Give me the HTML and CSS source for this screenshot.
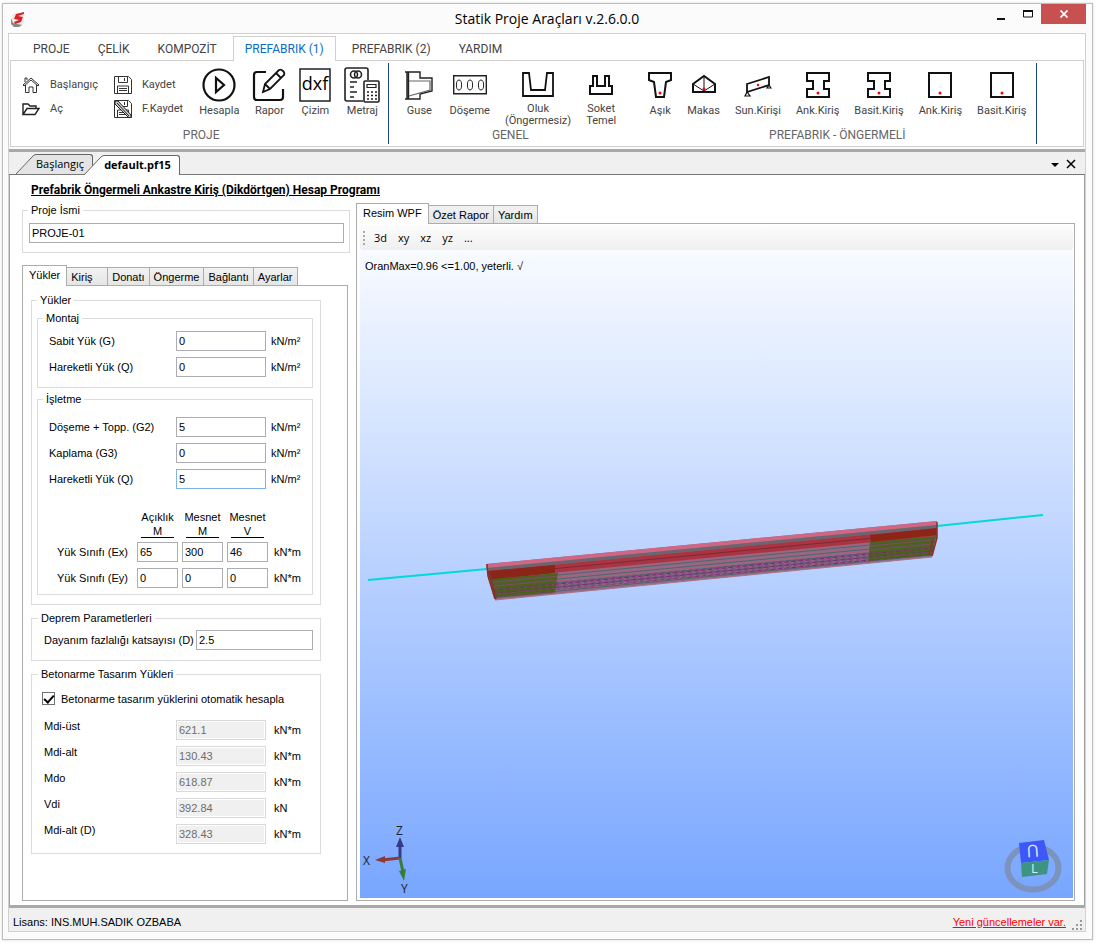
FILE: index.html
```html
<!DOCTYPE html>
<html lang="tr">
<head>
    <meta charset="UTF-8">
    <meta name="viewport" content="width=device-width, initial-scale=1.0">
    <title>Statik Proje Araçları v.2.6.0.0</title>
    <link rel="stylesheet" href="styles.css">
</head>
<body>
<div class="window">

    <!-- Başlık çubuğu -->
    <header class="titlebar">
        <svg class="logo" width="16" height="16" viewBox="0 0 16 16">
            <path d="M1 4l3-2h9v10l-3 3H4l-3-3z" fill="#ececec"/>
            <path d="M0 7l2 5 9 2-3 2H3l-3-3z" fill="#888"/>
            <path d="M13 1L5 3 3 8l5 1-5 2 1 2 6-2 2-5-5-1 6-2z" fill="#d9232a"/>
        </svg>
        <h1>Statik Proje Araçları v.2.6.0.0</h1>
        <div class="window-buttons">
            <button type="button" aria-label="Küçült"><svg width="10" height="12" viewBox="0 0 10 12"><path d="M1 10h8v2H1z" fill="#111"/></svg></button>
            <button type="button" aria-label="Büyüt"><svg width="10" height="12" viewBox="0 0 10 12"><path d="M.5 3v6h9V3z" fill="none" stroke="#111"/><path d="M0 2h10v2H0z" fill="#111"/></svg></button>
            <button type="button" class="close" aria-label="Kapat"><svg width="8" height="8" viewBox="0 0 8 8"><path d="M.5.5l7 7M7.5.5l-7 7" stroke="#fff" stroke-width="1.8"/></svg></button>
        </div>
    </header>

    <div class="frame">
        <!-- Şerit menü -->
        <nav class="ribbon-tabs">
            <button type="button">PROJE</button>
            <button type="button">ÇELİK</button>
            <button type="button">KOMPOZİT</button>
            <button type="button" class="active">PREFABRIK (1)</button>
            <button type="button">PREFABRIK (2)</button>
            <button type="button">YARDIM</button>
        </nav>

        <div class="ribbon">
            <section class="group project-group">
                <div class="tools">
                    <div class="small-tools">
                        <button type="button">
                            <svg width="18" height="18" viewBox="0 0 18 18" fill="none" stroke="#333"><path d="M1 9l8-7 8 7-1 1-7-6-7 6zM3.5 9v7.500H7V11h4v5.500h3.500V9M3 6V2h2v2"/></svg>
                            Başlangıç
                        </button>
                        <button type="button">
                            <svg width="18" height="18" viewBox="0 0 18 18" fill="none" stroke="#222" stroke-width="1.400"><path d="M1 14.500V4h5l2 2h6v3M1 14.500l4-6h12l-4 6z"/></svg>
                            Aç
                        </button>
                    </div>
                    <div class="small-tools">
                        <button type="button">
                            <svg width="18" height="18" viewBox="0 0 18 18" fill="none" stroke="#333"><path d="M.5.5h14l3 3v14H.5zM4.500.5v6h9v-6M10.500 2v3M3.500 17v-7h11v7M5 12.500h8M5 14.500h8"/></svg>
                            Kaydet
                        </button>
                        <button type="button">
                            <svg width="18" height="18" viewBox="0 0 18 18" fill="none" stroke="#333"><path d="M.5.5h14l3 3v14H.5zM4.500.5v6h9v-6M10.500 2v3M3.500 17v-7h11v7M5 12.500h8M5 14.500h8"/><path d="M1 1h3l13 14v3l-3-1L1 4z" fill="#ccc" stroke="#222"/><path d="M3 3l12 13" stroke="#222"/></svg>
                            F.Kaydet
                        </button>
                    </div>
                    <button type="button" class="tool">
                        <svg width="34" height="34" viewBox="0 0 34 34" fill="none" stroke="#111" stroke-width="2.200"><circle cx="17" cy="17" r="15.500"/><path d="M14 10v14l8-7z"/></svg>
                        Hesapla
                    </button>
                    <button type="button" class="tool">
                        <svg width="34" height="34" viewBox="0 0 34 34" fill="none" stroke="#111" stroke-width="2.200"><path d="M14 4H5q-3 0-3 3v22q0 3 3 3h23q3 0 3-3V21"/><path d="M11 24l2-8L27 2q2-1 4 1t1 4L18 21zM13 16l5 5M24 5l5 5" stroke-width="1.800"/></svg>
                        Rapor
                    </button>
                    <button type="button" class="tool">
                        <svg width="32" height="34" viewBox="0 0 32 34"><path d="M1 1h30v32H1z" fill="#fff" stroke="#222" stroke-width="1.500"/><text x="16" y="22" class="dxf">dxf</text></svg>
                        Çizim
                    </button>
                    <button type="button" class="tool">
                        <svg width="36" height="36" viewBox="0 0 36 36" fill="none" stroke="#222" stroke-width="1.600"><path d="M19 34H3q-2 0-2-2V3q0-2 2-2h19q2 0 2 2v10"/><circle cx="10" cy="7.500" r="3.500"/><circle cx="14" cy="7.500" r="3.500"/><path d="M6 15h7M6 20h4M6 25h7M6 30h4"/><rect x="20" y="14" width="15" height="21" rx="1" fill="#fff"/><path d="M23 17.500h9v3h-9z" stroke-width="1.200"/><path d="M23 25h10M23 28.500h10M23 32h10" stroke-dasharray="2 2"/></svg>
                        Metraj
                    </button>
                </div>
                <h2>PROJE</h2>
            </section>

            <section class="group general-group">
                <div class="tools">
                    <button type="button" class="tool">
                        <svg width="30" height="34" viewBox="0 0 30 34" fill="none" stroke="#222" stroke-width="1.400"><path d="M1 4h15v6h12v13l-12 3v5H1M3 4v27M4.500 4v27"/><path d="M5 13h21v9L5 28" stroke="#666" stroke-width="1.200"/></svg>
                        Guse
                    </button>
                    <button type="button" class="tool">
                        <svg width="34" height="34" viewBox="0 0 34 34" fill="none" stroke="#222"><path d="M.7 7.700h32.600v18H.7z" stroke-width="1.400"/><ellipse cx="6" cy="17" rx="2.600" ry="5"/><ellipse cx="17" cy="17" rx="2.600" ry="5"/><ellipse cx="28" cy="17" rx="2.600" ry="5"/></svg>
                        Döşeme
                    </button>
                    <button type="button" class="tool two-line">
                        <svg width="32" height="34" viewBox="0 0 32 34" fill="none" stroke="#111" stroke-width="1.800"><path d="M1 5h6l2 17h14l2-17h6v23H1z"/></svg>
                        Oluk<br>(Öngermesiz)
                    </button>
                    <button type="button" class="tool two-line">
                        <svg width="24" height="34" viewBox="0 0 24 34" fill="none" stroke="#111" stroke-width="2"><path d="M1 26v-8h3V8h4v10h8V8h4v10h3v8z"/></svg>
                        Soket<br>Temel
                    </button>
                </div>
                <h2>GENEL</h2>
            </section>

            <section class="group beam-group">
                <div class="tools">
                    <button type="button" class="tool">
                        <svg width="24" height="34" viewBox="0 0 24 34" fill="none" stroke="#111" stroke-width="2"><path d="M1 5h22v7l-5 2-2 15H8L6 14l-5-2z"/><circle cx="12" cy="25" r="1.500" fill="red" stroke="none"/></svg>
                        Aşık
                    </button>
                    <button type="button" class="tool">
                        <svg width="24" height="34" viewBox="0 0 24 34" fill="none" stroke="#111" stroke-width="2"><path d="M1 24v-8L12 8l11 8v8z"/><path d="M12 8v15M1 16l11 7 11-7" stroke-width="1"/><circle cx="12" cy="21" r="1.500" fill="red" stroke="none"/></svg>
                        Makas
                    </button>
                    <button type="button" class="tool">
                        <svg width="28" height="34" viewBox="0 0 28 34" fill="none" stroke="#111" stroke-width="1.800"><path d="M3 16l22-7v8L3 24z"/><path d="M3 24l-2 4h5zM25 17l-2 3h4z" stroke-width="1.200"/><circle cx="14" cy="17" r="1.200" fill="red" stroke="none"/></svg>
                        Sun.Kirişi
                    </button>
                    <button type="button" class="tool">
                        <svg width="24" height="34" viewBox="0 0 24 34" fill="none" stroke="#111" stroke-width="2"><path d="M1 5h22v8h-5v8h5v8H1v-8h6v-8H1z"/><circle cx="12" cy="25" r="1.500" fill="red" stroke="none"/></svg>
                        Ank.Kiriş
                    </button>
                    <button type="button" class="tool">
                        <svg width="24" height="34" viewBox="0 0 24 34" fill="none" stroke="#111" stroke-width="2"><path d="M1 5h22v8h-5v8h5v8H1v-8h6v-8H1z"/><circle cx="12" cy="25" r="1.500" fill="red" stroke="none"/></svg>
                        Basit.Kiriş
                    </button>
                    <button type="button" class="tool">
                        <svg width="24" height="34" viewBox="0 0 24 34" fill="none" stroke="#111" stroke-width="2"><path d="M1 5h22v24H1z"/><circle cx="12" cy="25" r="1.500" fill="red" stroke="none"/></svg>
                        Ank.Kiriş
                    </button>
                    <button type="button" class="tool">
                        <svg width="24" height="34" viewBox="0 0 24 34" fill="none" stroke="#111" stroke-width="2"><path d="M1 5h22v24H1z"/><circle cx="12" cy="25" r="1.500" fill="red" stroke="none"/></svg>
                        Basit.Kiriş
                    </button>
                </div>
                <h2>PREFABRIK - ÖNGERMELİ</h2>
            </section>
        </div>

        <!-- Belge sekmeleri -->
        <div class="doc-tabs">
            <button type="button" class="doc-tab">
                <svg width="20" height="20" viewBox="0 0 20 20"><path d="M0 20L16 3q2-2.500 4-2.500V20z" fill="#e4e4e4"/><path d="M0 20L16 3q2-2.500 4-2.500" fill="none" stroke="#666"/></svg>
                <span>Başlangıç</span>
            </button>
            <button type="button" class="doc-tab active">
                <svg width="20" height="20" viewBox="0 0 20 20"><path d="M0 20L16 3q2-2.500 4-2.500V20z" fill="#fff"/><path d="M0 20L16 3q2-2.500 4-2.500" fill="none" stroke="#666"/></svg>
                <span>default.pf15</span>
            </button>
            <div class="doc-actions">
                <button type="button" aria-label="Belgeler"><svg width="8" height="10" viewBox="0 0 8 10"><path d="M0 4h8L4 8z" fill="#000"/></svg></button>
                <button type="button" aria-label="Belgeyi kapat"><svg width="10" height="10" viewBox="0 0 10 10"><path d="M1 1l8 8M9 1L1 9" stroke="#000" stroke-width="1.500"/></svg></button>
            </div>
        </div>

        <main class="document">
            <h2 class="doc-title">Prefabrik Öngermeli Ankastre Kiriş (Dikdörtgen) Hesap Programı</h2>

            <div class="columns">
                <form class="inputs">
                    <fieldset class="project">
                        <legend>Proje İsmi</legend>
                        <input type="text" aria-label="Proje İsmi" value="PROJE-01">
                    </fieldset>

                    <div class="tabs">
                        <button type="button" class="active">Yükler</button>
                        <button type="button" class="wide">Kiriş</button>
                        <button type="button">Donatı</button>
                        <button type="button">Öngerme</button>
                        <button type="button">Bağlantı</button>
                        <button type="button">Ayarlar</button>
                    </div>

                    <div class="tab-page">
                        <fieldset class="loads">
                            <legend>Yükler</legend>

                            <fieldset class="inner">
                                <legend>Montaj</legend>
                                <div class="fields">
                                    <label for="sabit">Sabit Yük (G)</label>
                                    <input type="text" id="sabit" value="0">
                                    <span>kN/m²</span>
                                    <label for="hareketli">Hareketli Yük (Q)</label>
                                    <input type="text" id="hareketli" value="0">
                                    <span>kN/m²</span>
                                </div>
                            </fieldset>

                            <fieldset class="inner service">
                                <legend>İşletme</legend>
                                <div class="fields">
                                    <label for="doseme">Döşeme + Topp. (G2)</label>
                                    <input type="text" id="doseme" value="5">
                                    <span>kN/m²</span>
                                    <label for="kaplama">Kaplama (G3)</label>
                                    <input type="text" id="kaplama" value="0">
                                    <span>kN/m²</span>
                                    <label for="hareketli2">Hareketli Yük (Q)</label>
                                    <input type="text" id="hareketli2" class="focused" value="5">
                                    <span>kN/m²</span>
                                </div>

                                <table class="quake">
                                    <thead>
                                        <tr>
                                            <td></td>
                                            <th>Açıklık<span>M</span></th>
                                            <th>Mesnet<span>M</span></th>
                                            <th>Mesnet<span>V</span></th>
                                            <td></td>
                                        </tr>
                                    </thead>
                                    <tbody>
                                        <tr>
                                            <th>Yük Sınıfı (Ex)</th>
                                            <td><input type="text" aria-label="Ex açıklık M" value="65"></td>
                                            <td><input type="text" aria-label="Ex mesnet M" value="300"></td>
                                            <td><input type="text" aria-label="Ex mesnet V" value="46"></td>
                                            <td class="unit">kN*m</td>
                                        </tr>
                                        <tr>
                                            <th>Yük Sınıfı (Ey)</th>
                                            <td><input type="text" aria-label="Ey açıklık M" value="0"></td>
                                            <td><input type="text" aria-label="Ey mesnet M" value="0"></td>
                                            <td><input type="text" aria-label="Ey mesnet V" value="0"></td>
                                            <td class="unit">kN*m</td>
                                        </tr>
                                    </tbody>
                                </table>
                            </fieldset>
                        </fieldset>

                        <fieldset class="seismic">
                            <legend>Deprem Parametlerleri</legend>
                            <div class="seismic-row">
                                <label for="dayanim">Dayanım fazlalığı katsayısı (D)</label>
                                <input type="text" id="dayanim" value="2.5">
                            </div>
                        </fieldset>

                        <fieldset class="design">
                            <legend>Betonarme Tasarım Yükleri</legend>
                            <label class="check"><input type="checkbox" checked>Betonarme tasarım yüklerini otomatik hesapla</label>
                            <div class="fields">
                                <label for="mdiust">Mdi-üst</label>
                                <input type="text" id="mdiust" value="621.1" disabled>
                                <span>kN*m</span>
                                <label for="mdialt">Mdi-alt</label>
                                <input type="text" id="mdialt" value="130.43" disabled>
                                <span>kN*m</span>
                                <label for="mdo">Mdo</label>
                                <input type="text" id="mdo" value="618.87" disabled>
                                <span>kN*m</span>
                                <label for="vdi">Vdi</label>
                                <input type="text" id="vdi" value="392.84" disabled>
                                <span>kN</span>
                                <label for="mdialtd">Mdi-alt (D)</label>
                                <input type="text" id="mdialtd" value="328.43" disabled>
                                <span>kN*m</span>
                            </div>
                        </fieldset>
                    </div>
                </form>

                <section class="viewer">
                    <div class="tabs">
                        <button type="button" class="active">Resim WPF</button>
                        <button type="button">Özet Rapor</button>
                        <button type="button">Yardım</button>
                    </div>
                    <div class="view-page">
                        <div class="toolbar">
                            <button type="button">3d</button>
                            <button type="button">xy</button>
                            <button type="button">xz</button>
                            <button type="button">yz</button>
                            <button type="button">...</button>
                        </div>
                        <div class="canvas">
                            <p>OranMax=0.96 &lt;=1.00, yeterli. √</p>

                            <!-- Kiriş modeli -->
                            <svg class="beam" viewBox="0 0 713 648">
                                <defs>
                                    <pattern id="strands" width="30" height="4" patternUnits="userSpaceOnUse" patternTransform="rotate(-5.500)">
                                        <path d="M0 .5h30" stroke="#a8607c"/>
                                        <path d="M0 2.500h30" stroke="#4f6470" stroke-width="1.300"/>
                                    </pattern>
                                    <pattern id="tendons" width="7" height="3" patternUnits="userSpaceOnUse" patternTransform="rotate(-5.500)">
                                        <path d="M0 .5h5" stroke="#8a2482"/>
                                        <path d="M2 2h5" stroke="#54506f"/>
                                    </pattern>
                                    <pattern id="stirrups" width="9" height="4" patternUnits="userSpaceOnUse" patternTransform="rotate(-5.500)">
                                        <path d="M0 1h9" stroke="#3f640c" stroke-width="1.800"/>
                                        <path d="M0 3h9" stroke="#5b3d25"/>
                                        <path d="M4.500 2v2" stroke="#7a3a60" stroke-width=".5"/>
                                    </pattern>
                                </defs>
                                <path d="M8 330L127 319M577 276l106-11" stroke="#00d8dc" stroke-width="2"/>
                                <path d="M126 314L577 271v17l-5 19-437 43-8-27z" fill="#9a6c86"/>
                                <path d="M128 328L577 285v4l-5 17-437 43z" fill="url(#strands)"/>
                                <path d="M132 338l443-42-2 9-440 41z" fill="url(#tendons)"/>
                                <path d="M126 314L577 271v4L127 318z" fill="#cf6683"/>
                                <path d="M127 318L577 275v3L127 321z" fill="#6a6670"/>
                                <path d="M127 321L577 278v8L129 329z" fill="#a93542"/>
                                <path d="M128 325L577 282" stroke="#7d2737" fill="none"/>
                                <path d="M128 321l67-6v8l-65 7zM510 285l67-7v7l-66 7z" fill="#8a2518"/>
                                <path d="M130 329l68-6-3 20-60 5zM510 292l66-6-4 19-64 6z" fill="url(#stirrups)"/>
                                <path d="M127 314l1 12 7 23M130 324l6 25M577 272v16l-5 18M573 289l-4 16" fill="none" stroke="#853328" stroke-width="1.500"/>
                                <path d="M135 350l437-43" stroke="#a57389"/>
                            </svg>

                            <svg class="axes" width="50" height="76" viewBox="0 0 50 76">
                                <path d="M38 36V22" stroke="#39398a" stroke-width="3"/><path d="M38 15l4 10h-8z" fill="#39398a"/>
                                <path d="M38 36l-18 2" stroke="#8b3a3a" stroke-width="3"/><path d="M13 38l10-4v7z" fill="#8b3a3a"/>
                                <path d="M38 36l3 14" stroke="#397c39" stroke-width="3"/><path d="M42 59l-5-10 7-2z" fill="#397c39"/>
                                <text x="34" y="13">Z</text>
                                <text x="1" y="43">X</text>
                                <text x="39" y="71">Y</text>
                            </svg>

                            <svg class="cube" width="60" height="56" viewBox="0 0 60 56">
                                <ellipse cx="30" cy="29" rx="25.500" ry="21.500" fill="none" stroke="#7c93bd" stroke-width="6"/>
                                <path d="M16 4l25-3 5 20-28 3z" fill="#3d57fa"/>
                                <path d="M18 24l28-3-2 14-25 3z" fill="#3d9482"/>
                                <text transform="rotate(176 30 12)" x="24" y="18" font-size="17">U</text>
                                <text x="28" y="34" font-size="13">L</text>
                            </svg>
                        </div>
                    </div>
                </section>
            </div>
        </main>

        <footer class="statusbar">
            <span>Lisans: INS.MUH.SADIK OZBABA</span>
            <a href="#">Yeni güncellemeler var.</a>
            <svg width="12" height="12" viewBox="0 0 12 12"><path d="M9 1h2v2H9zM5 5h2v2H5zM9 5h2v2H9zM1 9h2v2H1zM5 9h2v2H5zM9 9h2v2H9z" fill="#999"/></svg>
        </footer>
    </div>
</div>
</body>
</html>
```
FILE: styles.css
```css
* {
    box-sizing: border-box;
}

body {
    margin: 0;
    padding: 3px 3px 4px 2px;
    min-height: 100vh;
    display: flex;
    background-color: #fff;
    color: #000;
    font-family: "Liberation Sans", Arial, sans-serif;
    font-size: 11px;
    line-height: 12px;
}

button, input {
    font: inherit;
    color: inherit;
}

button {
    margin: 0;
    padding: 0;
    border: none;
    background: none;
}

h1, h2, p {
    margin: 0;
    font-weight: normal;
}

svg {
    display: block;
    flex: none;
}

.window {
    flex: 1;
    min-width: 0;
    display: flex;
    flex-direction: column;
    padding: 0 6px 7px 5px;
    background-color: #fbfbfb;
    border: 1px solid #bdbdbd;
    box-shadow: 0 0 3px #ddd;
}

/* Başlık çubuğu */
.titlebar {
    display: grid;
    grid-template-columns: 1fr auto 1fr;
    align-items: start;
    height: 29px;
}

.titlebar .logo {
    margin: 7px 3px;
}

.titlebar h1 {
    padding-top: 5px;
    font-family: "Open Sans", sans-serif;
    font-size: 14px;
    line-height: 20px;
}

.window-buttons {
    display: flex;
    justify-content: flex-end;
}

.window-buttons button {
    width: 27px;
    height: 20px;
    display: flex;
    align-items: center;
    justify-content: center;
}

.window-buttons .close {
    width: 45px;
    background-color: #c75050;
}

.frame {
    flex: 1;
    display: flex;
    flex-direction: column;
    border: 1px solid #d0d0d0;
}

/* Şerit menü */
.ribbon-tabs {
    display: flex;
    height: 26px;
    padding: 2px 0 0 12px;
    background-color: #fff;
    font-family: Roboto, sans-serif;
    font-size: 12px;
    color: #444;
}

.ribbon-tabs button {
    padding: 0 11px;
    margin-right: 4px;
    border: 1px solid transparent;
    border-bottom: none;
}

.ribbon-tabs .active {
    margin-bottom: -1px;
    background-color: #fff;
    border-color: #d0d0d0;
    color: #0a6cc4;
    z-index: 1;
}

.ribbon {
    display: flex;
    height: 87px;
    margin: 0 1px 2px;
    padding: 2px 3px;
    background-color: #fff;
    border: 1px solid #d0d0d0;
    font-family: Roboto, sans-serif;
    color: #444;
}

.group {
    display: flex;
    flex-direction: column;
}

.project-group {
    padding: 0 8px;
    border-right: 1px solid #1e4480;
}

.general-group {
    padding: 0 15px;
}

.beam-group {
    padding: 0 10px 0 17px;
    border-right: 1px solid #1e4480;
}

.group h2 {
    font-size: 12px;
    line-height: 18px;
    text-align: center;
    color: #666;
}

.tools {
    display: flex;
    gap: 15px;
    height: 63px;
}

.project-group .tools {
    gap: 13px;
}

.small-tools {
    display: flex;
    flex-direction: column;
    gap: 6px;
    padding: 13px 3px 0 0;
}

.small-tools button {
    display: flex;
    align-items: center;
    gap: 10px;
    height: 18px;
}

.tool {
    display: flex;
    flex-direction: column;
    align-items: center;
    justify-content: flex-start;
    padding-top: 4px;
    line-height: 15px;
}

.tool svg {
    height: 36px;
}

.two-line {
    line-height: 12px;
}

.tool .dxf {
    font-family: "Open Sans", sans-serif;
    font-size: 18px;
    text-anchor: middle;
}

/* Belge sekmeleri */
.doc-tabs {
    display: flex;
    align-items: flex-end;
    height: 26px;
    padding-left: 7px;
    background-color: #f0f0f0;
    border-top: 3px solid #a9a9a9;
    border-bottom: 1px solid #777;
    font-family: "Open Sans", sans-serif;
}

.doc-tab {
    display: flex;
    height: 20px;
}

.doc-tab span {
    height: 20px;
    padding: 0 8px 0 0;
    border-top: 1px solid #666;
    border-right: 1px solid #666;
    border-radius: 0 3px 0 0;
    background-color: #e4e4e4;
    line-height: 18px;
}

.doc-tab.active {
    margin: 0 0 -1px -9px;
    z-index: 1;
}

.doc-tab.active span {
    background-color: #fff;
    font-weight: bold;
}

.doc-actions {
    display: flex;
    gap: 7px;
    margin-left: auto;
    padding: 0 9px 5px 0;
}

.document {
    flex: 1;
    display: flex;
    flex-direction: column;
    padding: 0 9px 4px 12px;
    background-color: #fff;
    border: 1px solid #a0a0a0;
    border-width: 0 1px;
}

.doc-title {
    height: 29px;
    padding: 0 9px;
    font-family: Roboto, sans-serif;
    font-size: 12px;
    font-weight: bold;
    line-height: 30px;
    text-decoration: underline;
}

.columns {
    flex: 1;
    display: flex;
    gap: 6px;
}

.inputs {
    flex: 0 0 328px;
    display: flex;
    flex-direction: column;
}

fieldset {
    min-width: 0;
    margin: 0;
    padding: 0;
    border: 1px solid #dcdcdc;
}

legend {
    margin-left: 5px;
    padding: 0 3px;
    height: 12px;
}

input[type="text"] {
    width: 100%;
    min-width: 0;
    height: 20px;
    padding: 0 2px;
    background-color: #fff;
    border: 1px solid #abadb3;
}

input[type="text"].focused {
    border-color: #7eb4ea;
}

input[type="text"]:disabled {
    background-color: #f0f0f0;
    border-color: #d9d9d9;
    box-shadow: inset 0 0 0 1px #fff;
    color: #6d6d6d;
}

.project {
    height: 49px;
    margin-bottom: 12px;
    padding: 7px 5px 0 6px;
}

.project legend {
    margin-left: -1px;
}

/* Sekmeler */
.tabs {
    display: flex;
    align-items: flex-end;
    height: 20px;
}

.tabs button {
    height: 18px;
    padding: 0 4px;
    margin-left: -1px;
    background: linear-gradient(#f2f2f2, #e5e5e5);
    border: 1px solid #acacac;
    border-bottom: none;
}

.tabs .wide {
    width: 42px;
    text-align: left;
}

.tabs .active {
    height: 21px;
    margin: 0 0 -1px;
    padding: 0 6px 3px;
    background: #fff;
    z-index: 1;
}

.tab-page {
    flex: 1;
    margin-right: 2px;
    padding: 8px 26px 0 8px;
    border: 1px solid #acacac;
}

.loads {
    padding: 6px 7px 9px 5px;
}

.loads > legend {
    margin-left: 0;
}

.inner {
    padding: 7px 0 10px 11px;
}

.inner legend {
    margin-left: -6px;
}

.service {
    margin-top: 5px;
    padding: 12px 0 0 11px;
}

.fields {
    display: grid;
    grid-template-columns: 127px 90px 1fr;
    align-items: center;
    row-gap: 6px;
}

.fields span {
    padding-left: 5px;
}

.quake {
    margin: 22px 0 0 8px;
    border-collapse: collapse;
}

.quake th, .quake td {
    padding: 0 4px 6px 0;
    font-weight: normal;
    text-align: left;
}

.quake tbody td {
    width: 45px;
}

.quake tbody th {
    width: 80px;
}

.quake thead th {
    padding-bottom: 4px;
    text-align: center;
}

.quake thead span {
    display: block;
    margin: 3px 4px 0;
    line-height: 11px;
    border-bottom: 1px solid #000;
}

.quake tbody .unit {
    width: auto;
    padding: 0 0 6px 2px;
}

.seismic {
    margin: 7px 0;
    padding: 6px 7px 10px 12px;
}

.seismic legend, .design legend {
    margin-left: -6px;
}

.seismic-row {
    display: grid;
    grid-template-columns: 152px 1fr;
    align-items: center;
}

.design {
    padding: 12px 0 9px 12px;
}

.check {
    display: flex;
    align-items: center;
    gap: 6px;
    height: 13px;
    margin: 0 0 15px -2px;
}

.check input {
    appearance: none;
    width: 13px;
    height: 13px;
    margin: 0;
    border: 1px solid #707070;
    position: relative;
}

.check input:checked::after {
    content: "";
    position: absolute;
    left: 3px;
    top: 0;
    width: 4px;
    height: 8px;
    border: solid #000;
    border-width: 0 2px 2px 0;
    transform: rotate(42deg);
}

.design .fields {
    grid-template-columns: 132px 90px 1fr;
}

.design .fields label {
    align-self: start;
}

.design .fields span {
    padding-left: 8px;
}

/* Çizim alanı */
.viewer {
    flex: 1;
    min-width: 0;
    display: flex;
    flex-direction: column;
}

.viewer .tabs {
    height: 19px;
}

.view-page {
    flex: 1;
    display: flex;
    flex-direction: column;
    padding: 1px 1px 2px 3px;
    border: 1px solid #acacac;
}

.toolbar {
    display: flex;
    align-items: center;
    gap: 11px;
    height: 25px;
    padding-left: 14px;
    background: linear-gradient(#fdfdfd, #efefef);
    border-radius: 0 0 3px 3px;
    font-family: "Open Sans", sans-serif;
    position: relative;
}

.toolbar::before {
    content: "";
    position: absolute;
    left: 3px;
    top: 6px;
    height: 14px;
    border-left: 2px dotted #aaa;
}

.canvas {
    flex: 1;
    position: relative;
    background: linear-gradient(#f8fbff, #78a6ff);
}

.canvas p {
    padding: 10px 5px;
}

.beam {
    position: absolute;
    inset: 0;
    width: 100%;
    height: 100%;
}

.axes {
    position: absolute;
    left: 2px;
    bottom: 0;
    font-family: "Open Sans", sans-serif;
    font-size: 12px;
    fill: #222;
}

.cube {
    position: absolute;
    right: 10px;
    bottom: 3px;
    fill: #dfe6f5;
    font-family: "Open Sans", sans-serif;
}

/* Durum çubuğu */
.statusbar {
    display: flex;
    align-items: center;
    gap: 5px;
    height: 26px;
    padding: 4px 2px 0 4px;
    background-color: #f0f0f0;
    border-top: 3px solid #a9a9a9;
}

.statusbar a {
    margin-left: auto;
    color: #f00;
}

.statusbar svg {
    align-self: flex-end;
}
```
